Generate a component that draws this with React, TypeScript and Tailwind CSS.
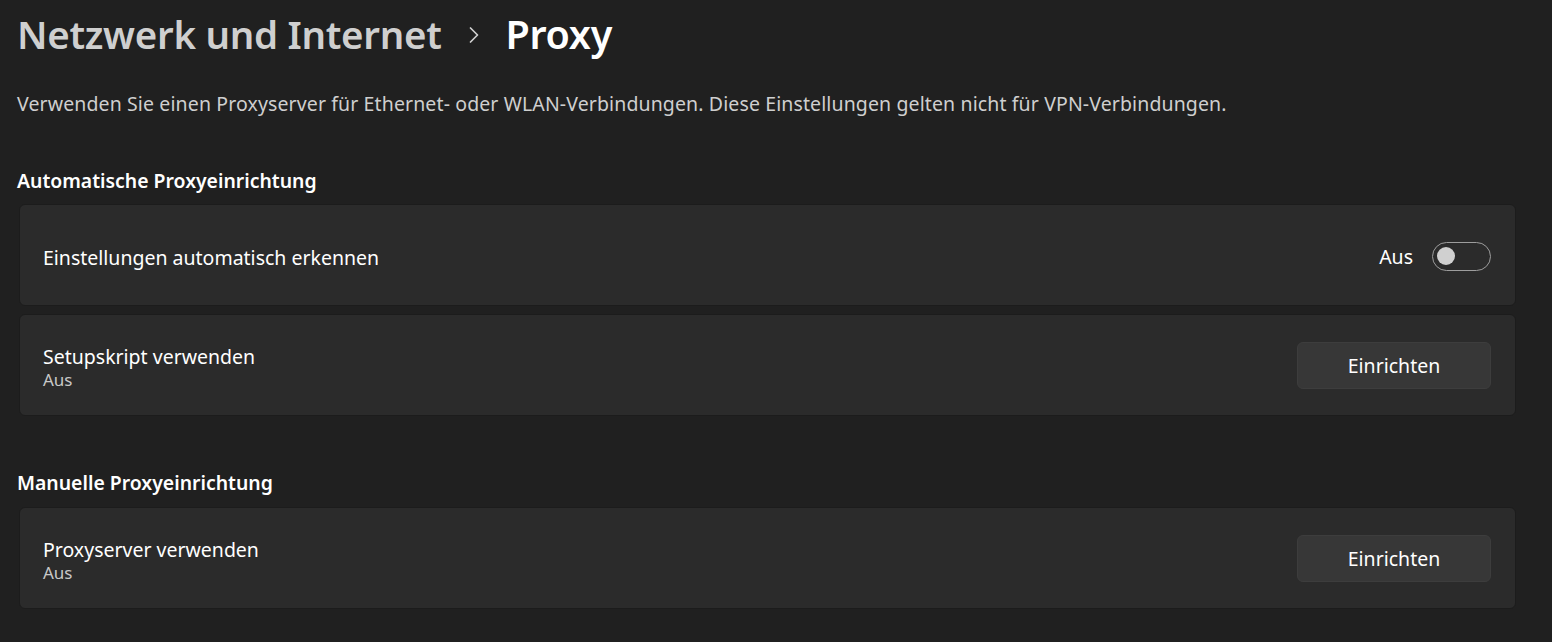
import { ChevronRight } from "lucide-react"

const font = { fontFamily: '"Noto Sans", "Open Sans", sans-serif' }

const Toggle = () => (
  <div className="w-[59px] h-[29px] rounded-full border border-[#9d9d9d] flex items-center px-[4px]">
    <div className="w-[18px] h-[18px] rounded-full bg-[#d0d0d0]" />
  </div>
)

const SetupButton = () => (
  <button className="w-[194px] h-[47px] rounded-[6px] bg-[#373737] border border-[#3d3d3d] text-white text-[19.5px]">
    Einrichten
  </button>
)

const Row = ({
  title,
  subtitle,
  children,
}: {
  title: string
  subtitle?: string
  children: React.ReactNode
}) => (
  <div className="h-[102px] rounded-[6px] bg-[#2b2b2b] border border-[#1c1c1c] flex items-center justify-between pl-[23px] pr-[24px]">
    <div className={subtitle ? "flex flex-col pt-[4px]" : "flex flex-col pt-[6px]"}>
      <span className="text-[19.5px] leading-[26px] text-white">{title}</span>
      {subtitle && <span className="text-[17px] leading-[20px] text-[#c8c8c8]">{subtitle}</span>}
    </div>
    {children}
  </div>
)

export default function App() {
  return (
    <div className="w-[1552px] h-[642px] bg-[#202020] overflow-hidden pl-[17px] pr-[36px]" style={font}>
      <div className="flex items-center h-[72px] pb-[2px]">
        <h1 className="text-[38.5px] font-semibold text-[#cfcfcf] tracking-[-0.3px]">Netzwerk und Internet</h1>
        <ChevronRight className="w-[28px] h-[28px] text-[#cfcfcf] ml-[19px] mr-[17px]" strokeWidth={1.5} />
        <h1 className="text-[39.5px] font-semibold text-white tracking-[-0.3px]">Proxy</h1>
      </div>
      <p className="text-[19.5px] text-[#cfcfcf] mt-[17px] tracking-[0.12px]">
        Verwenden Sie einen Proxyserver für Ethernet- oder WLAN-Verbindungen. Diese Einstellungen gelten nicht für VPN-Verbindungen.
      </p>

      <h2 className="text-[19.4px] font-semibold text-white mt-[48px] mb-[9px]">Automatische Proxyeinrichtung</h2>
      <div className="flex flex-col gap-[8px] ml-[2px]">
        <Row title="Einstellungen automatisch erkennen">
          <div className="flex items-center gap-[19px] pt-[2px]">
            <span className="text-[19.5px] text-white">Aus</span>
            <Toggle />
          </div>
        </Row>
        <Row title="Setupskript verwenden" subtitle="Aus">
          <SetupButton />
        </Row>
      </div>

      <h2 className="text-[19.4px] font-semibold text-white mt-[52px] mb-[10px]">Manuelle Proxyeinrichtung</h2>
      <div className="ml-[2px]">
        <Row title="Proxyserver verwenden" subtitle="Aus">
          <SetupButton />
        </Row>
      </div>
    </div>
  )
}
